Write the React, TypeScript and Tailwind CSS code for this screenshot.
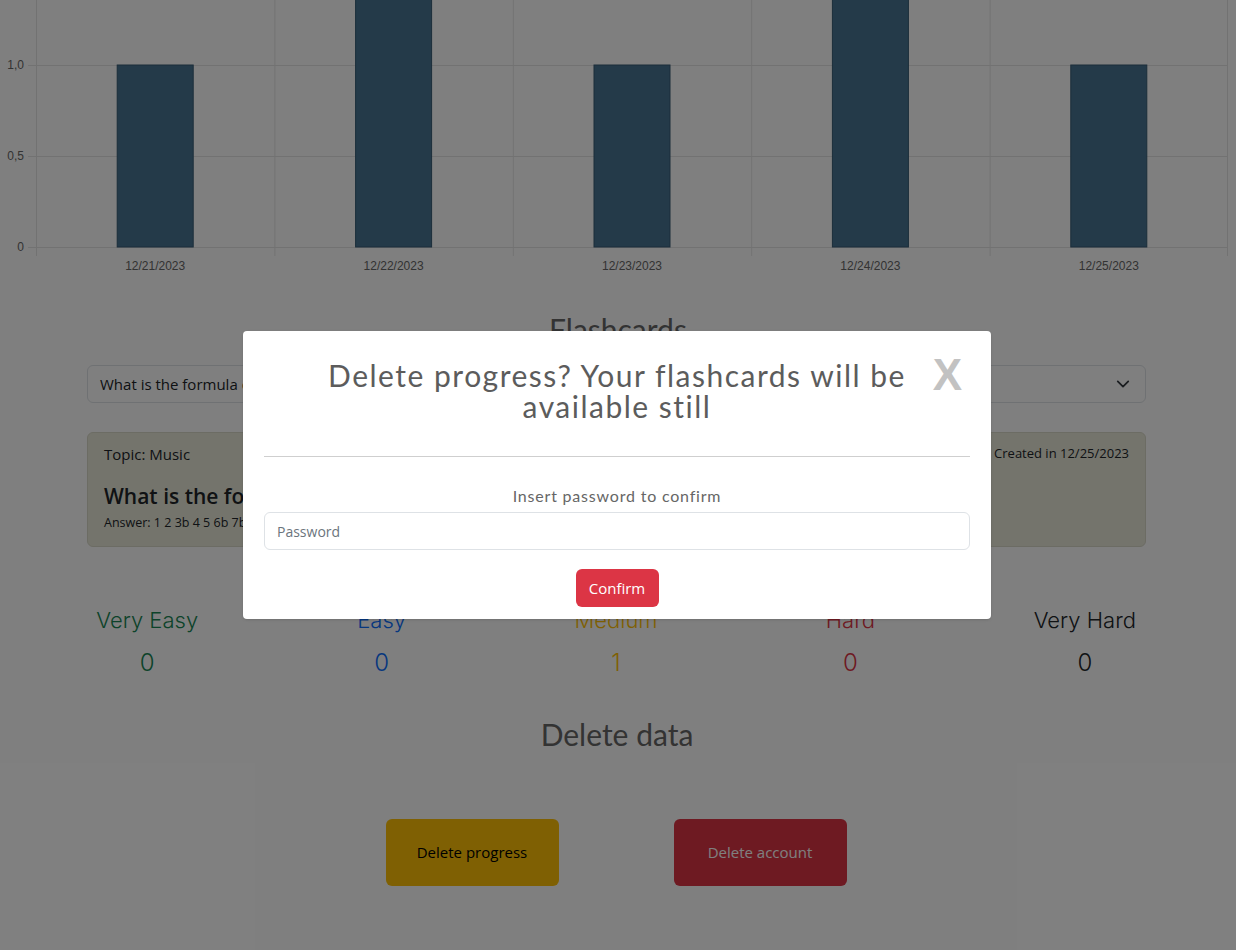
import React from "react";

const DAYS = [
  { label: "12/21/2023", value: 1 },
  { label: "12/22/2023", value: 2 },
  { label: "12/23/2023", value: 1 },
  { label: "12/24/2023", value: 2 },
  { label: "12/25/2023", value: 1 },
];

const STATS = [
  { name: "Very Easy", count: 0, color: "text-[#198754]" },
  { name: "Easy", count: 0, color: "text-[#0d6efd]" },
  { name: "Medium", count: 1, color: "text-[#ffc107]" },
  { name: "Hard", count: 0, color: "text-[#dc3545]" },
  { name: "Very Hard", count: 0, color: "text-[#212529]" },
];

// chart geometry, px
const LEFT = 36;
const RIGHT = 1228;
const ZERO = 247;
const UNIT = 182; // px per 1.0
const COL = (RIGHT - LEFT) / DAYS.length;
const BAR = 76;

function ReviewChart() {
  const gy = (v: number) => ZERO - v * UNIT;
  return (
    <svg width="1236" height="280" className="block" fontFamily="'Liberation Sans', Arial, sans-serif">
      {[0, 0.5, 1].map((v) => (
        <g key={v}>
          <line x1={28} x2={RIGHT} y1={gy(v) + 0.5} y2={gy(v) + 0.5} stroke="#e5e5e5" />
          <text x={24} y={gy(v) + 4} fontSize="12" fill="#666" textAnchor="end">
            {v === 0 ? "0" : v.toFixed(1).replace(".", ",")}
          </text>
        </g>
      ))}
      {DAYS.map((_, i) => (
        <line key={i} x1={LEFT + i * COL + 0.5} x2={LEFT + i * COL + 0.5} y1={0} y2={256} stroke="#e5e5e5" />
      ))}
      <line x1={RIGHT - 0.5} x2={RIGHT - 0.5} y1={0} y2={256} stroke="#e5e5e5" />
      {DAYS.map((d, i) => {
        const cx = LEFT + i * COL + COL / 2;
        return (
          <g key={d.label}>
            <rect
              x={cx - BAR / 2}
              y={gy(d.value)}
              width={BAR}
              height={d.value * UNIT}
              fill="#487593"
              stroke="#365a74"
              strokeWidth="1"
            />
            <text x={cx} y={270} fontSize="12" fill="#666" textAnchor="middle">
              {d.label}
            </text>
          </g>
        );
      })}
    </svg>
  );
}

function DeleteModal() {
  return (
    <div className="absolute inset-0 z-20 bg-black/50">
      <div className="relative ml-[243px] mt-[331px] w-[748px] rounded-[4px] bg-white px-[21px] pb-[12px] font-['Lato',sans-serif] shadow-sm">
        <h2 className="mx-auto w-[660px] pt-[29px] text-center text-[30px] leading-[31px] tracking-[1.5px] text-[#5c5c5c]">
          Delete progress? Your flashcards will be available still
        </h2>
        <button className="absolute right-[29px] top-[22px] font-['Liberation_Sans',Arial,sans-serif] text-[44px] font-bold leading-none text-[#c2c2c2]">
          X
        </button>
        <hr className="mt-[34px] border-t border-[#cfcfcf]" />
        <p className="mt-[29px] text-center text-[16px] leading-[20px] tracking-[0.8px] text-[#666]">
          Insert password to confirm
        </p>
        <input
          className="mt-[6px] block h-[38px] w-full rounded-[6px] border border-[#dee2e6] px-[12px] font-['Open_Sans',sans-serif] text-[14px] text-[#212529] placeholder:text-[#6c757d] outline-none"
          placeholder="Password"
        />
        <div className="mt-[19px] flex justify-center">
          <button className="h-[38px] w-[83px] rounded-[6px] bg-[#dc3545] font-['Open_Sans',sans-serif] text-[15px] text-white">
            Confirm
          </button>
        </div>
      </div>
    </div>
  );
}

export default function App() {
  return (
    <div className="relative h-[950px] w-[1236px] overflow-hidden bg-white">
      <ReviewChart />

      <h2 className="mt-[30px] text-center font-['Lato',sans-serif] text-[30px] leading-[38px] text-[#666]">
        Flashcards
      </h2>

      <div className="ml-[87px] w-[1059px] font-['Open_Sans',sans-serif]">
        <div className="mt-[17px] flex h-[38px] items-center justify-between rounded-[6px] border border-[#dee2e6] pl-[12px] pr-[15px] text-[15px] text-[#212529]">
          <span>What is the formula of the natural minor scale?</span>
          <svg width="14" height="14" viewBox="0 0 16 16" fill="none" stroke="#343a40" strokeWidth="2" strokeLinecap="round" strokeLinejoin="round">
            <path d="M2 5l6 6 6-6" />
          </svg>
        </div>

        <div className="mt-[29px] h-[115px] rounded-[6px] border border-[#d8d8c8] bg-[#e9e9d9] px-[16px] pt-[11px] text-[#212529]">
          <div className="flex items-start justify-between">
            <span className="text-[15px] leading-[20px]">Topic: Music</span>
            <span className="text-[13px] leading-[18px]">Created in 12/25/2023</span>
          </div>
          <h3 className="mt-[19px] text-[21px] font-semibold leading-[26px]">
            What is the formula of the natural minor scale?
          </h3>
          <p className="mt-[6px] text-[12.5px] leading-[16px]">Answer: 1 2 3b 4 5 6b 7b</p>
        </div>
      </div>

      <div className="mt-[58px] grid grid-cols-5 pl-[30px] pr-[34px] font-['Inter',sans-serif] font-light">
        {STATS.map((s) => (
          <div key={s.name} className={`flex flex-col items-center ${s.color}`}>
            <span className="text-[22px] leading-[30px]">{s.name}</span>
            <span className="mt-[13px] text-[24px] leading-[30px]">{s.count}</span>
          </div>
        ))}
      </div>

      <h2 className="mt-[37px] pr-[2px] text-center font-['Lato',sans-serif] text-[30px] leading-[38px] text-[#666]">
        Delete data
      </h2>

      <div className="mt-[66px] flex justify-center gap-[115px] pr-[4px] font-['Open_Sans',sans-serif] text-[15px]">
        <button className="h-[67px] w-[173px] rounded-[6px] bg-[#ffc107] text-[#000]">Delete progress</button>
        <button className="h-[67px] w-[173px] rounded-[6px] bg-[#dc3545] text-white">Delete account</button>
      </div>

      <DeleteModal />
    </div>
  );
}
